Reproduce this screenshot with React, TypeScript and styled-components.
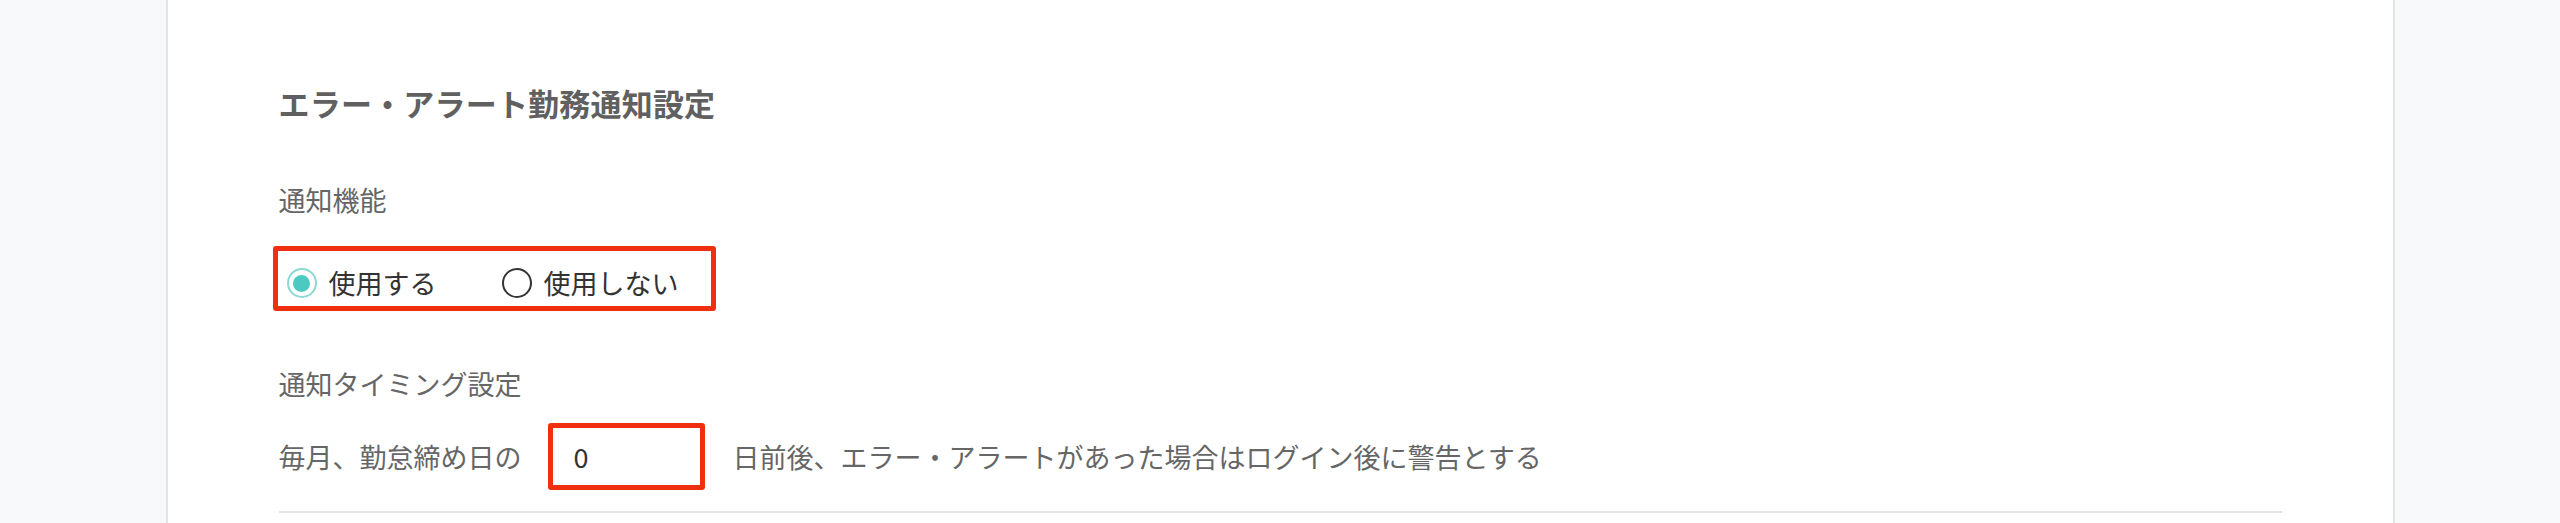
import React, { useState } from 'react';
import styled, { createGlobalStyle } from 'styled-components';

const colors = {
  page: '#f8f9fb',
  card: '#ffffff',
  cardBorder: '#e4e4e6',
  heading: '#606060',
  label: '#666666',
  text: '#333333',
  accent: '#4ccac1',
  accentRing: '#8ad9d2',
  highlight: '#ef2f0d',
  divider: '#e3e3e3',
};

const GlobalStyle = createGlobalStyle`
  html, body {
    margin: 0;
    padding: 0;
    background: ${colors.page};
    font-family: "Noto Sans CJK JP", "Noto Sans", sans-serif;
  }
`;

const Page = styled.div`
  min-height: 523px;
  background: ${colors.page};
`;

const Card = styled.section`
  width: 2229px;
  min-height: 523px;
  margin: 0 auto;
  box-sizing: border-box;
  background: ${colors.card};
  border-left: 2px solid ${colors.cardBorder};
  border-right: 2px solid ${colors.cardBorder};
  padding: 81px 111px 0;
`;

const Heading = styled.h2`
  margin: 0;
  font-size: 31px;
  line-height: 44px;
  font-weight: 700;
  color: ${colors.heading};
  letter-spacing: 0.2px;
`;

const FieldLabel = styled.div<{ $gap: number }>`
  margin-top: ${props => props.$gap}px;
  font-size: 27px;
  line-height: 40px;
  color: ${colors.label};
`;

const RadioGroup = styled.div`
  display: inline-flex;
  align-items: center;
  gap: 65px;
  margin: 26px 0 0 -6px;
  height: 65px;
  box-sizing: border-box;
  padding: 9px 32px 0 9px;
  border: 5px solid ${colors.highlight};
  border-radius: 3px;
`;

const RadioLabel = styled.label`
  display: flex;
  align-items: center;
  gap: 12px;
  cursor: pointer;
  font-size: 27px;
  line-height: 40px;
  color: ${colors.text};
`;

const HiddenInput = styled.input`
  position: absolute;
  opacity: 0;
  width: 0;
  height: 0;
  margin: 0;
`;

const RadioCircle = styled.span<{ $checked?: boolean }>`
  width: 30px;
  height: 30px;
  box-sizing: border-box;
  border-radius: 50%;
  flex-shrink: 0;
  display: flex;
  align-items: center;
  justify-content: center;
  border: ${props => props.$checked ? `2px solid ${colors.accentRing}` : `2px solid ${colors.text}`};

  &::after {
    content: '';
    width: 17px;
    height: 17px;
    border-radius: 50%;
    background: ${colors.accent};
    display: ${props => props.$checked ? 'block' : 'none'};
  }
`;

const TimingRow = styled.div`
  display: flex;
  align-items: center;
  margin-top: 19px;
  height: 67px;
  font-size: 27px;
  color: ${colors.label};
`;

const DayInput = styled.input`
  width: 157px;
  height: 67px;
  box-sizing: border-box;
  margin: 0 28px 0 26px;
  padding: 0 0 0 21px;
  border: 5px solid ${colors.highlight};
  border-radius: 3px;
  outline: none;
  font-family: inherit;
  font-size: 27px;
  color: ${colors.text};
  background: ${colors.card};
`;

const Divider = styled.hr`
  margin: 21px 0 0;
  border: 0;
  height: 2px;
  background: ${colors.divider};
`;

const options = [
  { value: 'on', label: '使用する' },
  { value: 'off', label: '使用しない' },
];

export default function App() {
  const [enabled, setEnabled] = useState('on');
  const [days, setDays] = useState('0');

  return (
    <Page>
      <GlobalStyle />
      <Card>
        <Heading>エラー・アラート勤務通知設定</Heading>

        <FieldLabel $gap={55}>通知機能</FieldLabel>
        <RadioGroup role="radiogroup">
          {options.map(opt => (
            <RadioLabel key={opt.value}>
              <HiddenInput
                type="radio"
                name="notify"
                value={opt.value}
                checked={enabled === opt.value}
                onChange={() => setEnabled(opt.value)}
              />
              <RadioCircle $checked={enabled === opt.value} />
              {opt.label}
            </RadioLabel>
          ))}
        </RadioGroup>

        <FieldLabel $gap={53}>通知タイミング設定</FieldLabel>
        <TimingRow>
          <span>毎月、勤怠締め日の</span>
          <DayInput value={days} onChange={e => setDays(e.target.value)} />
          <span>日前後、エラー・アラートがあった場合はログイン後に警告とする</span>
        </TimingRow>
        <Divider />
      </Card>
    </Page>
  );
}
